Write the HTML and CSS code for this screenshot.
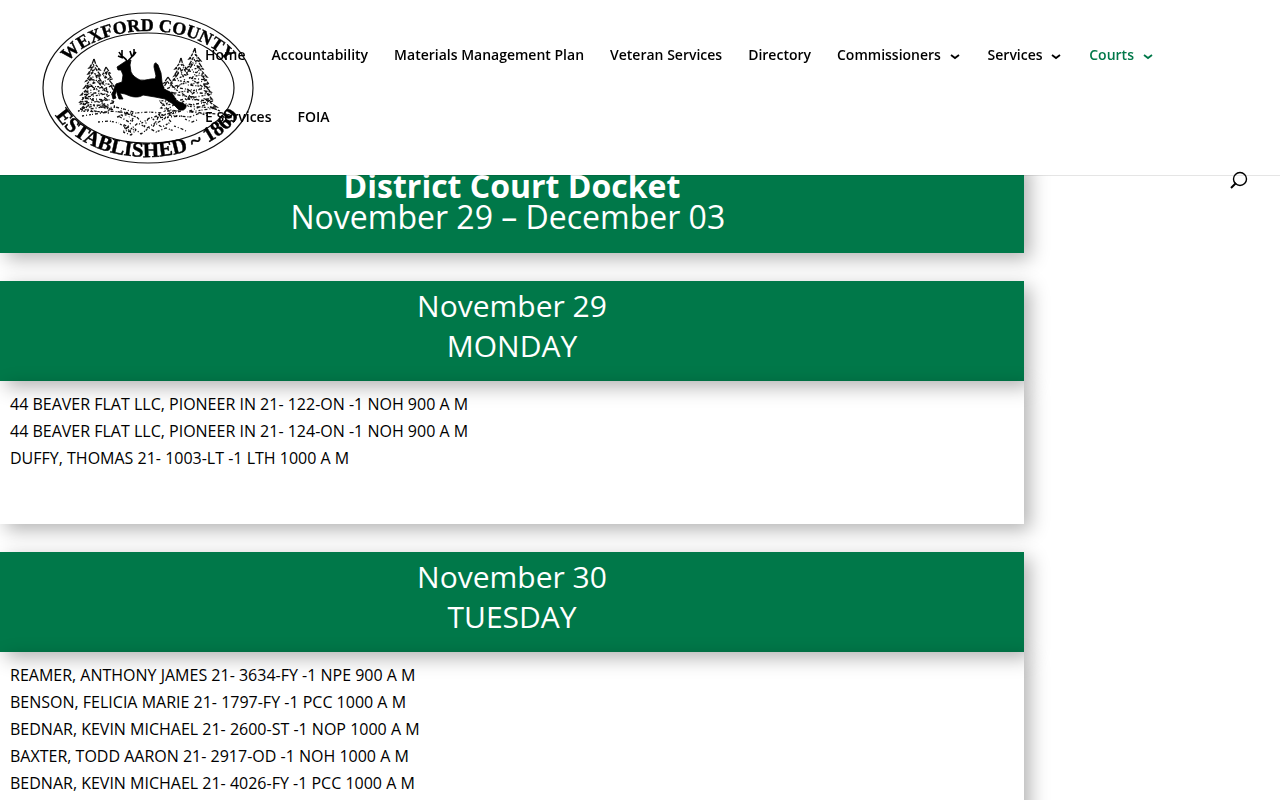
FILE: index.html
```
<!DOCTYPE html>
<html lang="en">
<head>
    <meta charset="UTF-8">
    <meta name="viewport" content="width=device-width, initial-scale=1.0">
    <title>District Court Docket</title>
    <link rel="stylesheet" href="styles.css">
</head>
<body>
    <header class="header">
        <a href="#" class="logo" aria-label="Wexford County">
            <svg viewBox="40 10 216 156" width="216" height="156">
                <defs>
                    <path id="arc-top" d="M58 88 A90 57 0 0 1 238 88"/>
                    <path id="arc-bottom" d="M47 88 A100 69 0 0 0 247 88"/>
                </defs>
                <ellipse class="ring" cx="148" cy="88" rx="105" ry="75"/>
                <ellipse class="ring" cx="148" cy="88" rx="86" ry="55"/>
                <text class="seal-text seal-top"><textPath href="#arc-top" startOffset="50%">WEXFORD COUNTY</textPath></text>
                <text class="seal-text"><textPath href="#arc-bottom" startOffset="50%">ESTABLISHED ~ 1869</textPath></text>

                <!-- trees, left -->
                <path class="tree" d="M94 59 l-2 5 l-3 4 l4 -1 l-5 7 l4 -1 l-6 8 l5 -2 l-7 9 l6 -2 l-9 9 l7 -1 l-8 8 l8 -1 l-7 8 l9 -4 M94 59 l2 6 l4 5 l-4 -1 l5 7 l-3 0 l5 8 l-4 -1 l6 8 M106 67 l-3 7 l4 -2 l-2 7 M106 67 l4 6 l-2 0 l4 6 l-3 1 l5 6 l-3 0 l4 7"/>
                <path class="needles" d="M93 64 l3 5 l-6 3 l8 3 l-10 4 l12 2 l-14 5 l17 1 l-19 5 l22 2 l-25 4 l27 2 l-29 4 l30 2 l-31 5 l30 1 l-26 4 M106 72 l-3 5 l7 1 l-8 5 l11 2 l-11 5 l12 3 l-10 5 l11 4 l-14 5 l14 3 M92 70 l5 7 l-6 9 l8 5 l-13 7 l19 6 l-26 5 l30 4 M103 81 l5 12 l-7 10 l11 7"/>
                <!-- trees, right -->
                <path class="tree" d="M195 48 l-3 7 l-3 4 l4 -1 l-5 9 l4 -2 l-5 8 M195 48 l1 7 l5 6 l-3 0 l5 8 l-4 -1 l8 9 l-5 -1 l7 8 l-6 0 l8 8 l-6 -1 l7 8 l-7 0 l12 8 l-7 0 l10 4 M181 58 l-2 6 l-4 5 l4 -1 l-5 8 l4 -2 l-7 9 M181 58 l2 7 l4 4 l-3 0 l4 6 M168 77 l-4 6 l3 -1 l-5 8 M168 77 l4 6 l-2 0 l4 5"/>
                <path class="needles" d="M195 54 l3 6 l-7 4 l9 3 l-11 4 l14 3 l-14 4 l18 2 l-19 5 l22 2 l-23 5 l25 2 l-27 5 l29 2 l-30 5 l32 2 l-27 4 l28 2 M181 64 l3 5 l-7 4 l9 2 l-12 5 l15 2 l-17 5 l20 3 l-22 4 l24 3 l-22 5 l23 3 M168 82 l3 5 l-7 3 l10 3 l-10 4 l13 2 M194 59 l5 11 l-8 9 l12 8 l-14 9 l18 8 l-20 8 M180 68 l5 13 l-10 8 l14 9 l-13 8"/>
                <!-- ground -->
                <path class="needles" d="M93 105 l12 3 l10 -1 l-8 4 l14 1 l8 2 l-12 3 l9 -4 l10 4 M160 114 l-6 3 l16 -4 l-5 -7 l-6 -5 l12 -1 l-10 8 l15 3 l-20 7 l26 -2 M112 102 l3 5 l9 2 l-5 3 l14 1 l-4 4 M124 109 l12 4 l12 -1 l14 1 M168 98 l-5 7 l12 -1 l-10 7 l16 0 l-13 4 l22 2 l10 -4 l8 3 M98 122 l11 -1 l10 2 M120 117 l9 5 l7 -6 l6 7 l9 -6 l6 6 l10 -6 l4 5 l-9 5 l-7 -4 l-8 5 l-9 -5 l-7 6 l-8 -5 l4 8 l8 -3 l6 5 l8 -6 l7 4 l10 -4 l8 3 M120 124 l7 4 l-4 4 l8 3 l5 -5 M133 120 l-6 8 l5 6 M148 119 l-4 8 M158 118 l-5 9 M174 126 l8 3 l4 2 M185 119 l7 3 l5 -2"/>
                <!-- antlers -->
                <path class="antler" d="M127 62 C127 57 122 59 119 52 M123 58 L118 56 M122 56 L122 50 M128 61 C131 57 135 56 134 49 M132 57 L130 51 M133 56 L136 52"/>
                <!-- stag -->
                <path class="stag" d="M117 67 L123 63 L126 61 L131 60 L130 65 L131 72 C133 76 136 78 140 80 C146 81 151 78 155 79 L156 76 L154 67 C154 62 156 62 158 65 L161 73 L162 82 L164 89 L172 93 L177 101 L182 103 L186 105 C187 107 184 111 182 110 C179 111 178 109 177 108 L173 104 L165 99 L155 97 L143 95 C139 98 133 97 130 96 L125 94 L120 93 L123 99 L119 99 L117 93 L117 90 L115 95 L116 98 L113 99 L112 95 L114 89 L116 84 L122 82 L123 75 L121 70 L118 70 Z"/>
            </svg>
        </a>
        <nav class="menu">
            <a href="#">Home</a>
            <a href="#">Accountability</a>
            <a href="#">Materials Management Plan</a>
            <a href="#">Veteran Services</a>
            <a href="#">Directory</a>
            <a href="#">Commissioners <svg class="arrow" viewBox="0 0 14 14"><path d="M3 5 L7 8 L11 5"/></svg></a>
            <a href="#">Services <svg class="arrow" viewBox="0 0 14 14"><path d="M3 5 L7 8 L11 5"/></svg></a>
            <a href="#" class="active">Courts <svg class="arrow" viewBox="0 0 14 14"><path d="M3 5 L7 8 L11 5"/></svg></a>
            <a href="#">E Services</a>
            <a href="#">FOIA</a>
        </nav>
        <button type="button" class="search" aria-label="Search">
            <svg viewBox="0 0 18 18" width="18" height="18"><circle cx="10" cy="7" r="6.5"/><path class="handle" d="M6 11 L1 16"/></svg>
        </button>
    </header>

    <main class="docket">
        <h1 class="title"><strong>District Court Docket</strong><br>November 29 – December 03&nbsp;</h1>

        <section class="day">
            <h2 class="day-title">November 29<br>MONDAY</h2>
            <ul class="cases">
                <li>44 BEAVER FLAT LLC, PIONEER IN 21- 122-ON -1 NOH 900 A M</li>
                <li>44 BEAVER FLAT LLC, PIONEER IN 21- 124-ON -1 NOH 900 A M</li>
                <li>DUFFY, THOMAS 21- 1003-LT -1 LTH 1000 A M</li>
            </ul>
        </section>

        <section class="day">
            <h2 class="day-title">November 30<br>TUESDAY</h2>
            <ul class="cases">
                <li>REAMER, ANTHONY JAMES 21- 3634-FY -1 NPE 900 A M</li>
                <li>BENSON, FELICIA MARIE 21- 1797-FY -1 PCC 1000 A M</li>
                <li>BEDNAR, KEVIN MICHAEL 21- 2600-ST -1 NOP 1000 A M</li>
                <li>BAXTER, TODD AARON 21- 2917-OD -1 NOH 1000 A M</li>
                <li>BEDNAR, KEVIN MICHAEL 21- 4026-FY -1 PCC 1000 A M</li>
            </ul>
        </section>
    </main>
</body>
</html>
```
FILE: styles.css
```
body {
    font-family: "Open Sans", Arial, sans-serif;
    font-size: 16px;
    color: #000;
    background: #fff;
    margin: 0;
}
.header {
    position: fixed;
    top: 0;
    left: 0;
    right: 0;
    z-index: 10;
    padding: 24px 80px 27px 205px;
    background: #fff;
    box-shadow: 0 1px 0 rgba(0, 0, 0, 0.1);
}
/* the seal hangs over the first menu items */
.logo {
    position: absolute;
    top: 10px;
    left: 40px;
}
.logo svg {
    display: block;
}
.ring {
    fill: none;
    stroke: #111;
    stroke-width: 1.2;
}
.seal-text {
    font-family: "Liberation Serif", serif;
    font-size: 21px;
    font-weight: bold;
    text-anchor: middle;
    stroke: #000;
    stroke-width: 0.4;
}
.seal-top {
    font-size: 18px;
}
.tree {
    fill: none;
    stroke: #111;
    stroke-width: 1.3;
    stroke-dasharray: 5 1 3 1;
}
.needles {
    fill: none;
    stroke: #111;
    stroke-width: 1.3;
    stroke-dasharray: 2 2 1 2 3 2 1 1;
}
.antler {
    fill: none;
    stroke: #000;
    stroke-width: 1.6;
}
.stag {
    fill: #000;
    stroke: #000;
    stroke-width: 0.8;
}
.menu {
    position: relative;
    display: flex;
    flex-wrap: wrap;
    column-gap: 26px;
}
.menu a {
    color: #000;
    font-size: 14px;
    font-weight: 600;
    line-height: 62px;
    text-decoration: none;
}
.menu a.active {
    color: #007849;
}
.arrow {
    width: 14px;
    height: 14px;
    margin-left: 3px;
    vertical-align: -4px;
    fill: none;
    stroke: currentColor;
    stroke-width: 1.8;
}
.search {
    position: absolute;
    top: 172px;
    right: 32px;
    padding: 0;
    border: none;
    background: none;
    cursor: pointer;
}
.search svg {
    display: block;
    overflow: visible;
    fill: none;
    stroke: #000;
    stroke-width: 1.4;
}
.search .handle {
    stroke-width: 2;
}
.docket {
    width: 80%;
    padding-top: 160px;
}
.title,
.day-title {
    margin: 0;
    color: #fff;
    background: #007849;
    font-weight: normal;
    text-align: center;
    box-shadow: 6px 6px 18px rgba(0, 0, 0, 0.3);
}
.title {
    padding: 10px 0 21px;
    font-size: 32px;
    line-height: 31px;
}
.day {
    margin-top: 28px;
}
.day-title {
    padding: 5px 0 15px;
    font-size: 30px;
    line-height: 40px;
}
.cases {
    margin: 0;
    padding: 10px 10px 52px;
    list-style: none;
    line-height: 27px;
    box-shadow: 6px 6px 18px rgba(0, 0, 0, 0.3);
}
```
